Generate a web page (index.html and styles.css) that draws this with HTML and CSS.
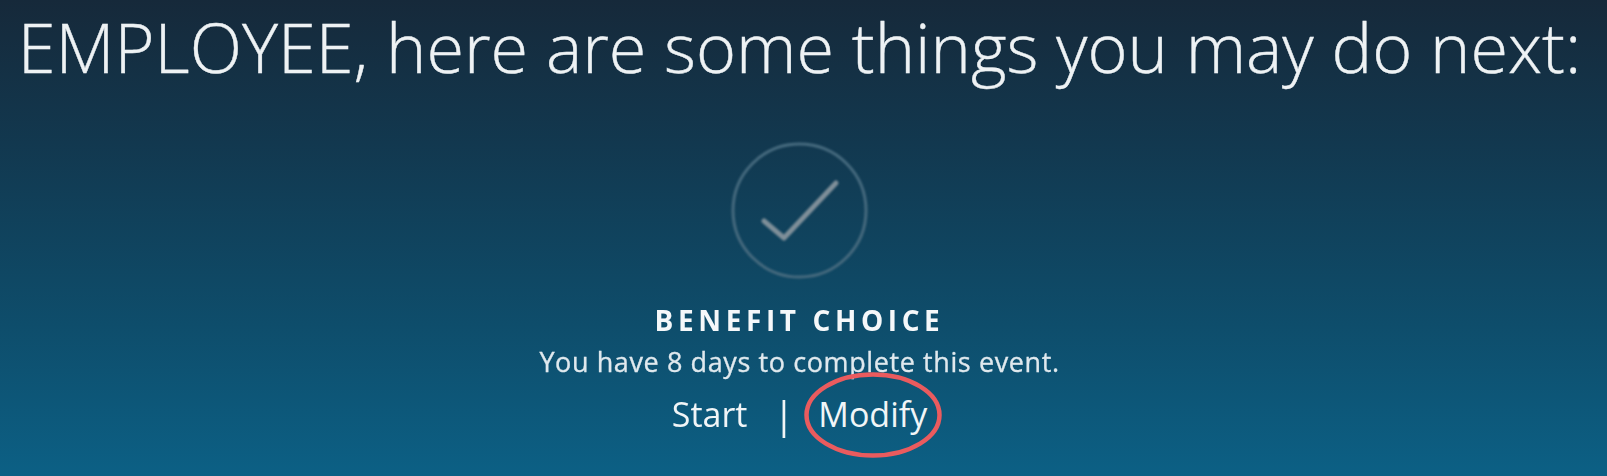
FILE: index.html
```html
<!DOCTYPE html>
<html>
<head>
<meta name="viewport" content="width=device-width, initial-scale=1">
<link rel="stylesheet" href="styles.css">
</head>
<body>

<div class="panel">
  <h1 class="title">EMPLOYEE, here are some things you may do next:</h1>

  <svg class="check-icon" width="137" height="137" viewBox="0 0 137 137">
    <circle cx="68.5" cy="68.5" r="66.5" fill="none" stroke="#466a7e" stroke-width="3"/>
    <path d="M33 79 L53 96 L105 41" fill="none" stroke="#7f8f99" stroke-width="5" stroke-linecap="round" stroke-linejoin="round"/>
  </svg>

  <h2 class="event-name">BENEFIT CHOICE</h2>
  <p class="event-note">You have 8 days to complete this event.</p>

  <div class="actions">
    <a class="action">Start</a>
    <span class="divider">|</span>
    <a class="action action-circled">Modify
      <svg class="circle-mark" width="138" height="86" viewBox="0 0 138 86">
        <ellipse cx="69" cy="43" rx="66.5" ry="40.5" fill="none" stroke="#ea5b5e" stroke-width="4.5"/>
      </svg>
    </a>
  </div>
</div>

</body>
</html>
```

FILE: styles.css
```css
* {
  box-sizing: border-box;
}

html, body {
  margin: 0;
  height: 100%;
}

body {
  font-family: "Open Sans", "Noto Sans", sans-serif;
  overflow: hidden;
}

.panel {
  height: 476px;
  background: linear-gradient(to bottom, #16293a 0%, #12384f 30%, #0e4d6b 68%, #0c6085 100%);
  color: #f1f5f7;
  display: flex;
  flex-direction: column;
  align-items: center;
  padding-right: 8px;
}

.title {
  margin: 0;
  font-size: 68.4px;
  font-weight: 300;
  line-height: 94px;
  white-space: nowrap;
  color: #eef2f4;
  filter: blur(0.6px);
  -webkit-text-stroke: 0.4px #eef2f4;
}

.check-icon {
  display: block;
  margin-top: 48px;
  filter: blur(0.8px);
}

.event-name {
  margin: 23px 0 0;
  font-size: 28px;
  font-weight: 700;
  line-height: 36px;
  letter-spacing: 4.6px;
  color: #f5f8fa;
  filter: blur(0.5px);
}

.event-note {
  margin: 8px 0 0;
  font-size: 27px;
  line-height: 32px;
  letter-spacing: 0.6px;
  color: #e0e9ee;
  filter: blur(0.5px);
  -webkit-text-stroke: 0.3px #e0e9ee;
}

.actions {
  display: flex;
  align-items: center;
  margin-top: 13px;
  font-size: 34px;
  line-height: 46px;
}

.action {
  filter: blur(0.5px);
}

.divider {
  margin: 0 24px 0 26px;
  font-size: 38px;
  line-height: 46px;
  filter: blur(0.5px);
}

.action-circled {
  position: relative;
  filter: none;
}

.circle-mark {
  position: absolute;
  left: -14px;
  top: -19px;
}
```
